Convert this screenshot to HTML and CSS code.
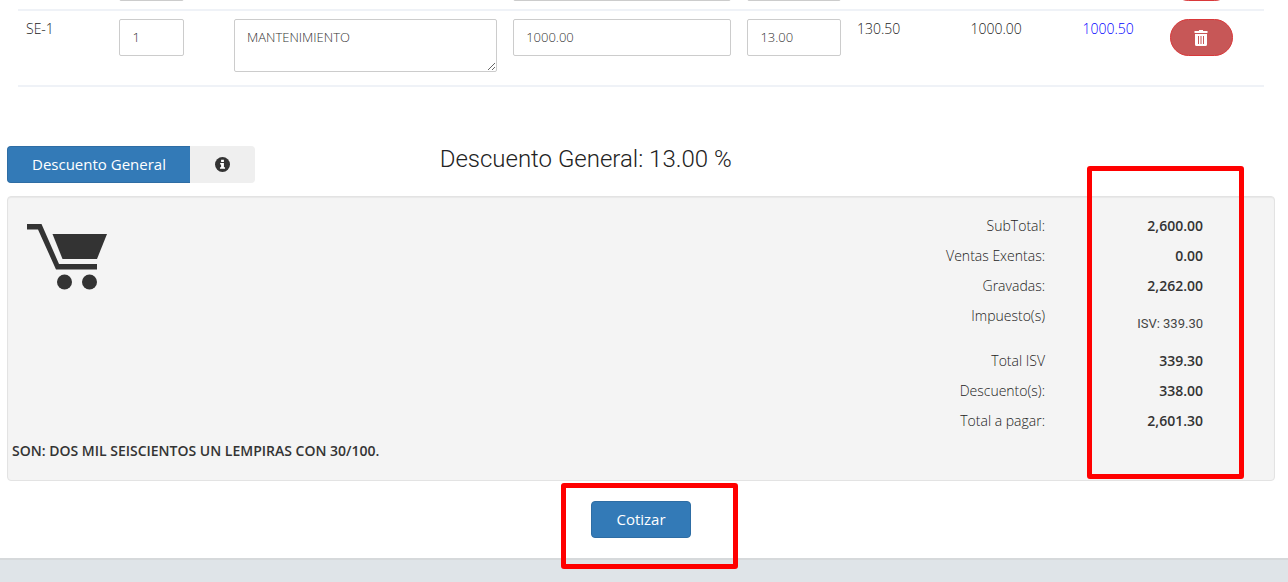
FILE: index.html
```html
<!DOCTYPE html>
<html lang="es">
<head>
<meta charset="utf-8">
<meta name="viewport" content="width=device-width, initial-scale=1">
<title>Cotizar</title>
<link rel="stylesheet" href="styles.css">
</head>
<body>
<svg class="sprite" aria-hidden="true">
  <symbol id="trash" viewBox="0 0 14 16">
    <path fill="currentColor" fill-rule="evenodd" d="M5 0h4v1h4.500v2H.5V1H5zM1 4h12v10.500q0 1.500-1.500 1.500h-9Q1 16 1 14.500zM4 6v8h1V6zm2.500 0v8h1V6zM9 6v8h1V6z"/>
  </symbol>
</svg>
<main class="page">
  <div class="items-wrap">
    <table class="items">
      <colgroup>
        <col class="col-code"><col class="col-qty"><col class="col-desc"><col class="col-price"><col class="col-disc">
        <col class="col-tax"><col class="col-sub"><col class="col-total"><col class="col-action">
      </colgroup>
      <tbody>
        <tr>
          <td></td>
          <td><input class="field field-qty" type="text" aria-label="Cantidad"></td>
          <td></td>
          <td><input class="field" type="text" aria-label="Precio"></td>
          <td><input class="field" type="text" aria-label="Descuento"></td>
          <td></td><td></td><td></td>
          <td><button class="delete" type="button" aria-label="Eliminar"><svg class="trash"><use href="#trash"/></svg></button></td>
        </tr>
        <tr>
          <td>SE-1</td>
          <td><input class="field field-qty" type="text" value="1" aria-label="Cantidad"></td>
          <td><textarea class="field field-desc" aria-label="Descripción">MANTENIMIENTO</textarea></td>
          <td><input class="field" type="text" value="1000.00" aria-label="Precio"></td>
          <td><input class="field" type="text" value="13.00" aria-label="Descuento"></td>
          <td>130.50</td>
          <td>1000.00</td>
          <td class="amount">1000.50</td>
          <td><button class="delete" type="button" aria-label="Eliminar"><svg class="trash"><use href="#trash"/></svg></button></td>
        </tr>
      </tbody>
    </table>
  </div>

  <div class="discount-row">
    <div class="btn-group">
      <button class="btn btn-primary" type="button">Descuento General</button>
      <button class="btn btn-info" type="button" aria-label="Información">
        <svg class="info" viewBox="0 0 16 16"><circle cx="8" cy="8" r="8" fill="#333"/><path fill="#fff" d="M6.500 3h3v2.200h-3zM5.500 6.500h4v4.500h1.200v1.500H5.300V11h1.200V8h-1z"/></svg>
      </button>
    </div>
    <h3 class="discount-title">Descuento General: 13.00 %</h3>
  </div>

  <section class="well">
    <div class="summary">
      <svg class="cart" viewBox="0 0 80 67" aria-hidden="true">
        <g fill="#333"><path d="M0 0h14.500l17.500 40h38v5.500H29L11 5.500H0z"/><path d="M25.500 10H80L70 35H35.500z"/><circle cx="37.500" cy="58" r="7.500"/><circle cx="62.500" cy="58" r="7.500"/></g>
      </svg>
      <dl class="totals">
        <dt>SubTotal:</dt><dd>2,600.00</dd>
        <dt>Ventas Exentas:</dt><dd>0.00</dd>
        <dt>Gravadas:</dt><dd>2,262.00</dd>
        <dt>Impuesto(s)</dt><dd class="tax">ISV: 339.30</dd>
        <dt>Total ISV</dt><dd>339.30</dd>
        <dt>Descuento(s):</dt><dd>338.00</dd>
        <dt>Total a pagar:</dt><dd>2,601.30</dd>
      </dl>
    </div>
    <p class="words">SON: DOS MIL SEISCIENTOS UN LEMPIRAS CON 30/100.</p>
    <span class="mark mark-totals"></span>
  </section>

  <div class="actions">
    <div class="quote">
      <button class="btn btn-primary" type="button">Cotizar</button>
      <span class="mark mark-quote"></span>
    </div>
  </div>
</main>
<footer class="footer"></footer>
</body>
</html>
```
FILE: styles.css
```css
* {
  box-sizing: border-box;
}

html {
  overflow: hidden;
}

body {
  margin: 0;
  min-height: 100vh;
  display: flex;
  flex-direction: column;
  overflow: hidden;
  background: #fff;
  color: #222;
  font: 300 14px/20px "Open Sans", "Noto Sans", sans-serif;
}

.sprite {
  display: none;
}

.page {
  padding: 0 13px 20px 7px;
}

/* The list is scrolled: only the end of the first row shows. */
.items-wrap {
  margin: -44px 11px 0;
}

.items {
  width: 100%;
  table-layout: fixed;
  border-collapse: separate;
  border-spacing: 0;
}

.items td {
  padding: 8px;
  vertical-align: top;
  border-bottom: 2px solid #eff2f7;
}

.items .amount {
  color: #00f;
}

.col-code { width: 7.5%; }
.col-qty { width: 9.2%; }
.col-desc { width: 22.4%; }
.col-price { width: 18.8%; }
.col-disc { width: 8.8%; }
.col-tax { width: 9.1%; }
.col-sub { width: 9%; }
.col-total { width: 7%; }
.col-action { width: 8.2%; }

.field {
  display: block;
  width: 100%;
  height: 37px;
  padding: 7px 12px 9px;
  border: 1px solid #ccc;
  border-radius: 2px;
  background: #fff;
  color: #333;
  font: inherit;
  font-size: 13px;
  line-height: 19px;
}

.field-qty {
  width: 65px;
}

.field-desc {
  height: 53px;
  margin-bottom: 5px;
  padding-top: 8px;
  resize: both;
}

.delete {
  display: flex;
  align-items: center;
  justify-content: center;
  width: 63px;
  height: 37px;
  padding: 0;
  border: 1px solid #d9383a;
  border-radius: 20px;
  background: #c75757;
  color: #fff;
}

.trash {
  width: 14px;
  height: 16px;
}

.discount-row {
  display: grid;
  grid-template-columns: 1fr 2fr;
  margin: 59px -15px 13px;
}

.btn-group {
  display: flex;
  padding-left: 15px;
}

.btn {
  height: 37px;
  padding: 0 24px 2px;
  border: 1px solid transparent;
  border-radius: 4px;
  font: inherit;
  font-weight: 400;
  font-size: 15px;
}

.btn-primary {
  background: #337ab7;
  border-color: #2e6da4;
  color: #fff;
}

.btn-group .btn-primary {
  border-right: 0;
  border-radius: 4px 0 0 4px;
}

.btn-info {
  display: flex;
  align-items: center;
  padding-bottom: 0;
  border-radius: 0 4px 4px 0;
  background: #efefef;
}

.info {
  width: 15px;
  height: 15px;
}

.discount-title {
  margin: 0;
  padding-left: 15px;
  color: #222;
  font: 300 24px/26px Roboto, sans-serif;
}

.well {
  position: relative;
  padding: 14px 4px;
  border: 1px solid #e3e3e3;
  border-radius: 4px;
  background: #f4f4f4;
  box-shadow: inset 0 1px 1px rgba(0, 0, 0, 0.05);
}

.summary {
  display: flex;
  align-items: flex-start;
  justify-content: space-between;
  padding: 0 67px 0 15px;
}

.cart {
  width: 80px;
  height: 67px;
  margin-top: 13px;
}

.totals {
  display: grid;
  grid-template-columns: auto 158px;
  margin: 0;
  line-height: 30px;
  text-align: right;
}

.totals dd {
  margin: 0;
  color: #333;
  font-weight: 600;
}

.totals .tax {
  color: #444;
  font: 400 13px/45px Roboto, sans-serif;
}

.words {
  margin: 0;
  color: #333;
  font-weight: 600;
  line-height: 30px;
}

.actions {
  display: flex;
  justify-content: center;
  margin-top: 20px;
}

.quote {
  position: relative;
}

.mark {
  position: absolute;
  border: 5px solid #f00;
  border-radius: 3px;
  pointer-events: none;
}

.mark-totals {
  inset: -31px 30px 1px auto;
  width: 157px;
}

.mark-quote {
  inset: -18px -47px -31px -30px;
}

.footer {
  flex: 1;
  border-top: 2px solid #d6d9db;
  background: #dfe4e8;
}
```
